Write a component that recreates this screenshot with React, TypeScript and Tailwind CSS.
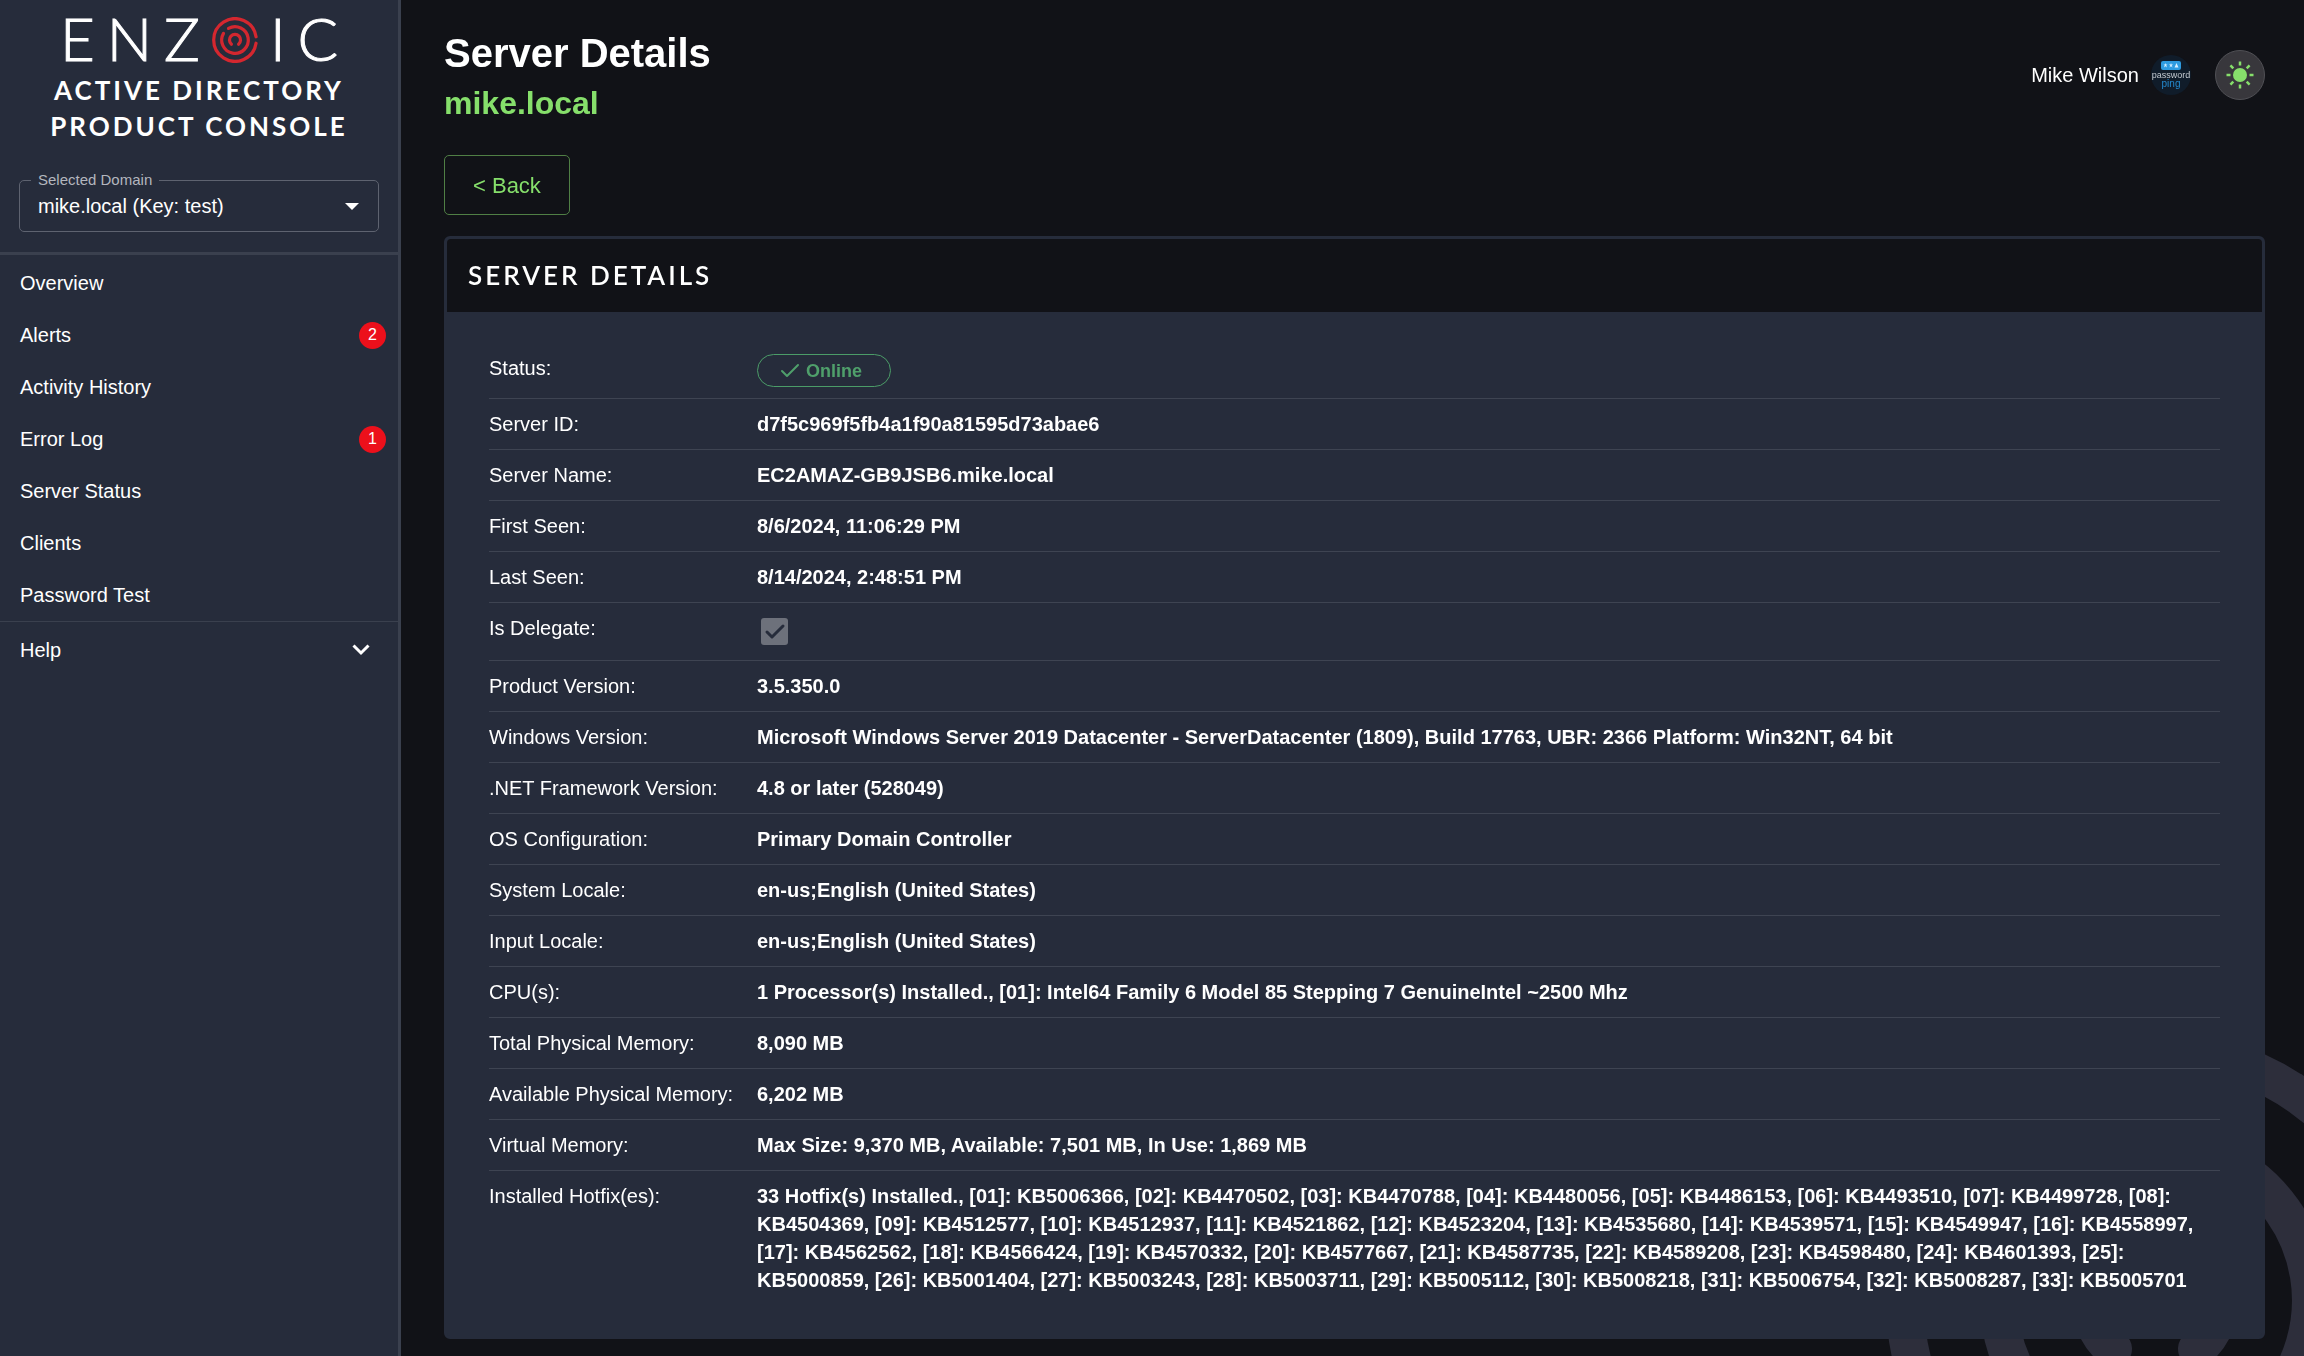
import { ReactNode } from 'react';
import { Check } from 'lucide-react';

interface NavItem {
  label: string;
  count?: number;
}

interface DetailRowProps {
  label: string;
  htmlFor?: string;
  children: ReactNode;
}

const navItems: NavItem[] = [
  { label: 'Overview' },
  { label: 'Alerts', count: 2 },
  { label: 'Activity History' },
  { label: 'Error Log', count: 1 },
  { label: 'Server Status' },
  { label: 'Clients' },
  { label: 'Password Test' },
];

const hotfixes = [
  'KB5006366', 'KB4470502', 'KB4470788', 'KB4480056', 'KB4486153', 'KB4493510', 'KB4499728', 'KB4504369',
  'KB4512577', 'KB4512937', 'KB4521862', 'KB4523204', 'KB4535680', 'KB4539571', 'KB4549947', 'KB4558997',
  'KB4562562', 'KB4566424', 'KB4570332', 'KB4577667', 'KB4587735', 'KB4589208', 'KB4598480', 'KB4601393',
  'KB5000859', 'KB5001404', 'KB5003243', 'KB5003711', 'KB5005112', 'KB5008218', 'KB5006754', 'KB5008287',
  'KB5005701',
];

const hotfixText =
  `${hotfixes.length} Hotfix(s) Installed., ` +
  hotfixes.map((kb, i) => `[${String(i + 1).padStart(2, '0')}]: ${kb}`).join(', ');

const identity = [
  ['Server ID:', 'd7f5c969f5fb4a1f90a81595d73abae6'],
  ['Server Name:', 'EC2AMAZ-GB9JSB6.mike.local'],
  ['First Seen:', '8/6/2024, 11:06:29 PM'],
  ['Last Seen:', '8/14/2024, 2:48:51 PM'],
];

const system = [
  ['Product Version:', '3.5.350.0'],
  [
    'Windows Version:',
    'Microsoft Windows Server 2019 Datacenter - ServerDatacenter (1809), Build 17763, UBR: 2366 Platform: Win32NT, 64 bit',
  ],
  ['.NET Framework Version:', '4.8 or later (528049)'],
  ['OS Configuration:', 'Primary Domain Controller'],
  ['System Locale:', 'en-us;English (United States)'],
  ['Input Locale:', 'en-us;English (United States)'],
  ['CPU(s):', '1 Processor(s) Installed., [01]: Intel64 Family 6 Model 85 Stepping 7 GenuineIntel ~2500 Mhz'],
  ['Total Physical Memory:', '8,090 MB'],
  ['Available Physical Memory:', '6,202 MB'],
  ['Virtual Memory:', 'Max Size: 9,370 MB, Available: 7,501 MB, In Use: 1,869 MB'],
  ['Installed Hotfix(es):', hotfixText],
];

// Three broken rings, used in the logo and as the page watermark
function Rings({ className }: { className?: string }) {
  return (
    <svg viewBox="-270 -270 540 540" className={className} fill="none" stroke="currentColor" strokeWidth="38" aria-hidden="true">
      <path strokeLinecap="round" d="M247 -38 A250 250 0 1 0 247 38" />
      <path strokeLinecap="round" d="M-76 -136 A156 156 0 1 1 -135 -78" />
      <path strokeLinecap="round" d="M-42 49 A65 65 0 1 1 42 49" />
    </svg>
  );
}

function Logo() {
  return (
    <div className="flex flex-col items-center font-['Lato',sans-serif] text-white">
      <div className="flex h-[60px] items-center gap-3 pl-3 text-[60px] leading-[60px] font-light [-webkit-text-stroke:1px_white]">
        <span className="pb-1 tracking-[12px]">ENZ</span>
        <Rings className="-ml-3 size-[46px] text-[#d4272f]" />
        <span className="pb-1 tracking-[12px]">IC</span>
      </div>
      <div className="mt-0.5 text-center text-[26px] leading-9 font-bold tracking-[3px]">
        <div>ACTIVE DIRECTORY</div>
        <div>PRODUCT CONSOLE</div>
      </div>
    </div>
  );
}

function DomainSelect() {
  return (
    <div className="relative mx-[19px]">
      <label htmlFor="domain" className="absolute -top-2.5 left-3 bg-[#262c3b] px-[7px] text-[15px] leading-5 text-[#b3b6be]">
        Selected Domain
      </label>
      <select
        id="domain"
        className="h-[52px] w-full appearance-none rounded-[5px] border border-[#5e6370] bg-transparent px-[18px] text-xl text-white"
      >
        <option>mike.local (Key: test)</option>
      </select>
      <svg viewBox="0 0 14 7" className="pointer-events-none absolute top-[23px] right-5 h-[7px] w-3.5 fill-white" aria-hidden="true">
        <path d="M0 0h14L7 7z" />
      </svg>
    </div>
  );
}

function Sidebar() {
  return (
    <aside className="w-[401px] shrink-0 border-r-[3px] border-[#3a404e] bg-[#262c3b] pt-2.5">
      <Logo />
      <div className="mt-9 border-b-[3px] border-[#3a404e] pb-5">
        <DomainSelect />
      </div>
      <nav className="text-xl leading-7">
        <ul className="pt-0.5">
          {navItems.map(({ label, count }) => (
            <li key={label}>
              <a href="#" className="flex h-[52px] items-center justify-between pr-3 pl-5">
                {label}
                {count && (
                  <span className="flex size-[27px] items-center justify-center rounded-full bg-[#ec101b] text-base leading-none">
                    {count}
                  </span>
                )}
              </a>
            </li>
          ))}
        </ul>
        <button type="button" className="flex h-14 w-full items-center justify-between border-t border-[#3a404e] pr-7 pl-5">
          Help
          <svg viewBox="0 0 18 12" className="h-3 w-[18px]" fill="none" stroke="white" strokeWidth="3" aria-hidden="true">
            <path d="M1.5 1.5 9 9l7.5-7.5" />
          </svg>
        </button>
      </nav>
    </aside>
  );
}

function Avatar() {
  return (
    <svg viewBox="0 0 40 40" className="size-10 font-['Liberation_Sans',sans-serif]" aria-hidden="true">
      <circle cx="20" cy="20" r="20" fill="#101c2a" />
      <rect x="10" y="6" width="20" height="9" rx="2" fill="#2e9be0" />
      <g fill="#d9f0ff">
        <path d="M14.5 8 16 12.5 12.5 9.5h4L13 12.5z" />
        <path d="M20 8 21.5 12.5 18 9.5h4L18.5 12.5z" />
        <path d="M25.5 8 27.5 12.5h-4z" />
      </g>
      <text x="20" y="23" textAnchor="middle" fontSize="9" fill="#c3c9d0">password</text>
      <text x="20" y="32" textAnchor="middle" fontSize="10" fill="#2488cc">ping</text>
    </svg>
  );
}

function SunIcon() {
  const angles = [0, 45, 90, 135, 180, 225, 270, 315];
  return (
    <svg viewBox="-14 -14 28 28" className="size-7 text-[#86df6b]" aria-hidden="true">
      <circle r="7" fill="currentColor" />
      {angles.map((a) => (
        <path key={a} d="M0 -13.5V-9.5" stroke="currentColor" strokeWidth="2.5" transform={`rotate(${a})`} />
      ))}
    </svg>
  );
}

function DetailRow({ label, htmlFor, children }: DetailRowProps) {
  return (
    <div className="flex border-b border-[#3e4452] py-[11px] last:border-b-0">
      <dt className="w-[268px] shrink-0">{htmlFor ? <label htmlFor={htmlFor}>{label}</label> : label}</dt>
      <dd className="min-w-0 flex-1 font-bold">{children}</dd>
    </div>
  );
}

function ServerCard() {
  return (
    <section className="rounded-md border-[3px] border-[#262c3b] bg-[#262c3b]">
      <h2 className="rounded-t-sm bg-[#111217] px-[21px] py-[18px] font-['Lato',sans-serif] text-[26px] leading-[37px] font-semibold tracking-[3px]">
        SERVER DETAILS
      </h2>
      <dl className="px-[42px] py-[31px] text-xl leading-7">
        <DetailRow label="Status:">
          <span className="flex h-[33px] w-[134px] items-center gap-1 rounded-full border border-[#4b9c68] pl-5 text-lg text-[#4f9f6b]">
            <Check className="size-6" strokeWidth={2} />
            Online
          </span>
        </DetailRow>
        {identity.map(([label, value]) => (
          <DetailRow key={label} label={label}>{value}</DetailRow>
        ))}
        <DetailRow label="Is Delegate:" htmlFor="delegate">
          <span className="relative m-1 block size-[27px]">
            <input
              id="delegate"
              type="checkbox"
              defaultChecked
              disabled
              className="block size-[27px] appearance-none rounded-[3px] bg-[#6d717b]"
            />
            <Check className="absolute inset-0 m-auto size-6 text-[#262c3b]" strokeWidth={3} />
          </span>
        </DetailRow>
        {system.map(([label, value]) => (
          <DetailRow key={label} label={label}>{value}</DetailRow>
        ))}
      </dl>
    </section>
  );
}

export default function App() {
  return (
    <div className="relative isolate flex min-h-screen bg-[#111217] font-['Liberation_Sans',Arial,sans-serif] text-white">
      <div className="pointer-events-none fixed inset-0 -z-10 overflow-hidden">
        <Rings className="absolute -right-[121px] -bottom-[214px] size-[540px] text-[#2d2e3b]" />
      </div>
      <Sidebar />
      <main className="min-w-0 flex-1 pt-[29px] pr-[39px] pb-4 pl-[43px]">
        <header className="flex items-start justify-between">
          <div>
            <h1 className="text-[40px] leading-[48px] font-bold">Server Details</h1>
            <p className="mt-1.5 text-[32px] leading-10 font-bold text-[#86df6b]">mike.local</p>
          </div>
          <div className="mt-[21px] flex items-center text-xl">
            <span className="mr-3">Mike Wilson</span>
            <Avatar />
            <button
              type="button"
              aria-label="Toggle theme"
              className="ml-6 flex size-[50px] items-center justify-center rounded-full border border-[#505055] bg-[#38373c]"
            >
              <SunIcon />
            </button>
          </div>
        </header>
        <button type="button" className="mt-8 mb-[21px] h-[60px] rounded-[5px] border border-[#507f45] px-7 text-[22px] text-[#86df6b]">
          &lt; Back
        </button>
        <ServerCard />
      </main>
    </div>
  );
}
